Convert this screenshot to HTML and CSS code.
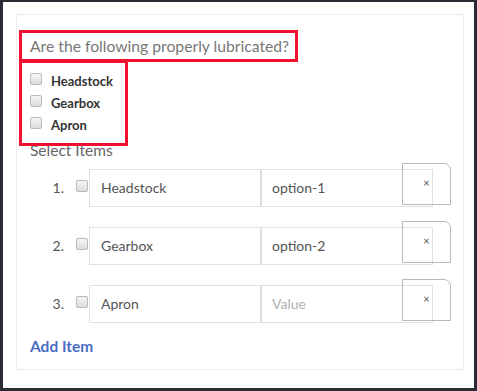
FILE: index.html
```html
<!DOCTYPE html>
<html lang="en">
<head>
  <meta charset="UTF-8" />
  <title>Checklist Item</title>
  <link rel="stylesheet" href="styles.css">
</head>
<body>
  <div class="frame">
    <div class="card">
      <div class="question marked">Are the following properly lubricated?</div>
      <div class="choices marked">
        <div class="choice"><span class="check"></span>Headstock</div>
        <div class="choice"><span class="check"></span>Gearbox</div>
        <div class="choice"><span class="check"></span>Apron</div>
      </div>
      <div class="section-label">Select Items</div>
      <div class="items">
        <div class="item">
          <span class="num">1.</span>
          <span class="check"></span>
          <div class="field">Headstock</div>
          <div class="field">option-1</div>
          <div class="remove">×</div>
        </div>
        <div class="item">
          <span class="num">2.</span>
          <span class="check"></span>
          <div class="field">Gearbox</div>
          <div class="field">option-2</div>
          <div class="remove">×</div>
        </div>
        <div class="item">
          <span class="num">3.</span>
          <span class="check"></span>
          <div class="field">Apron</div>
          <div class="field placeholder">Value</div>
          <div class="remove">×</div>
        </div>
      </div>
      <a class="add-item" href="#">Add Item</a>
    </div>
  </div>
</body>
</html>
```

FILE: styles.css
```css
* {
  box-sizing: border-box;
}
body {
  margin: 0;
  font-family: 'Lato', 'Open Sans', sans-serif;
  background: #ffffff;
}
.frame {
  width: 477px;
  height: 391px;
  border: 3px solid #2b2a35;
  border-top-width: 2px;
  padding: 12px 10px 0 13px;
  background: #ffffff;
}
.card {
  border: 1px solid #ececec;
  width: 448px;
  height: 356px;
  padding: 15px 0 0 2px;
}
.marked {
  border: 3px solid #f0102f;
  position: relative;
  z-index: 2;
}
.question {
  display: inline-block;
  width: 279px;
  height: 32px;
  padding-left: 8px;
  font-size: 15.7px;
  line-height: 26px;
  color: #777777;
}
.choices {
  width: 109px;
  height: 86px;
  margin-top: -2px;
  padding: 7px 0 0 8px;
}
.choice {
  display: flex;
  align-items: center;
  height: 22px;
  font-size: 13px;
  font-weight: 700;
  color: #333333;
}
.choice .check {
  margin-right: 9px;
  margin-top: -4px;
}
.check {
  display: inline-block;
  width: 12px;
  height: 12px;
  border: 1px solid #b9b9b9;
  border-radius: 2px;
  background: linear-gradient(#f6f6f6, #dcdcdc);
  flex-shrink: 0;
}
.section-label {
  margin: -6px 0 0 11px;
  font-size: 15.5px;
  line-height: 20px;
  color: #666666;
}
.items {
  margin: 9px 0 0 11px;
  display: flex;
  flex-direction: column;
  gap: 20px;
}
.item {
  display: flex;
  align-items: flex-start;
  height: 38px;
}
.num {
  width: 34px;
  text-align: right;
  font-size: 14px;
  line-height: 38px;
  color: #555555;
}
.item .check {
  margin: 11px 1px 0 12px;
}
.field {
  width: 172px;
  height: 38px;
  border: 1px solid #e0e0e0;
  padding-left: 11px;
  font-size: 14px;
  line-height: 36px;
  color: #555555;
}
.field + .field {
  padding-left: 10px;
}
.placeholder {
  color: #b0b0b0;
}
.remove {
  width: 49px;
  height: 42px;
  margin: -6px 0 0 -31px;
  border: 1px solid #b8b8b8;
  border-radius: 0 7px 0 0;
  text-align: center;
  font-size: 11px;
  line-height: 11px;
  padding-top: 13px;
  color: #555555;
}
.add-item {
  display: block;
  margin: 13px 0 0 11px;
  font-size: 15.5px;
  line-height: 20px;
  font-weight: 700;
  color: #4a6cc4;
  text-decoration: none;
}
```
